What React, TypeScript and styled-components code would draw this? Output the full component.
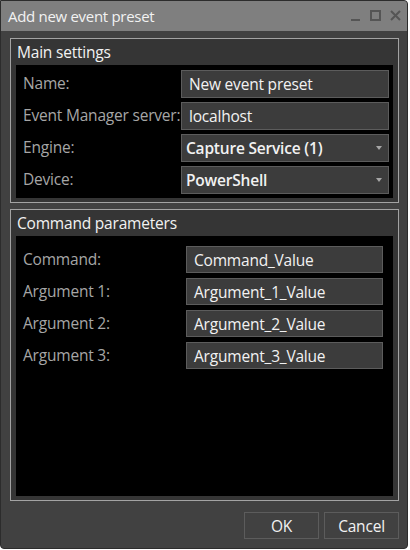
import { Fragment } from "react";
import styled, { createGlobalStyle } from "styled-components";

const GlobalStyle = createGlobalStyle`
  html, body {
    margin: 0;
    padding: 0;
    background: #ffffff;
  }
  body {
    font-family: "Open Sans", "Noto Sans", "Liberation Sans", sans-serif;
  }
`;

const Window = styled.div`
  width: 408px;
  height: 549px;
  box-sizing: border-box;
  display: flex;
  flex-direction: column;
  background: #414141;
  border: 1px solid #2c2c2c;
  border-radius: 0 4px 4px 4px;
  overflow: hidden;
`;

const TitleBar = styled.div`
  height: 30px;
  flex: none;
  display: flex;
  align-items: center;
  justify-content: space-between;
  padding: 0 6px 0 7px;
  background: #7f7f7f;
`;

const Title = styled.div`
  color: #f2f2f2;
  font-size: 15px;
  letter-spacing: -0.3px;
`;

const Controls = styled.div`
  display: flex;
  align-items: center;
  gap: 9px;
`;

const Body = styled.div`
  flex: 1;
  display: flex;
  flex-direction: column;
  padding: 7px 8px 9px 9px;
  gap: 6px;
`;

const Group = styled.div<{ $grow?: boolean }>`
  display: flex;
  flex-direction: column;
  flex: ${(p) => (p.$grow ? 1 : "none")};
  border: 1px solid #a3a3a3;
  background: #353535;
  padding: 0 5px 4px 5px;
`;

const GroupHeader = styled.div`
  height: 26px;
  display: flex;
  align-items: center;
  padding-left: 1px;
  color: #f2f2f2;
  font-size: 15.5px;
  letter-spacing: -0.2px;
`;

const Content = styled.div<{ $labelWidth: number; $pad: string; $gap: number }>`
  flex: 1;
  background: #000;
  display: grid;
  grid-template-columns: ${(p) => p.$labelWidth}px 1fr;
  grid-auto-rows: min-content;
  row-gap: ${(p) => p.$gap}px;
  padding: ${(p) => p.$pad};
  align-items: center;
`;

const Label = styled.div`
  color: #a6a6a6;
  font-size: 15.5px;
  letter-spacing: -0.2px;
  white-space: nowrap;
  margin-top: -2px;
`;

const Field = styled.div<{ $h: number; $bold?: boolean }>`
  position: relative;
  height: ${(p) => p.$h}px;
  box-sizing: border-box;
  display: flex;
  align-items: center;
  padding-left: ${(p) => (p.$bold ? 4 : 7)}px;
  background: #3c3c3c;
  border: 1px solid #5c5c5c;
  color: #f2f2f2;
  font-size: 15.5px;
  font-weight: ${(p) => (p.$bold ? 600 : 400)};
  letter-spacing: -0.2px;
`;

const Arrow = styled.span`
  position: absolute;
  right: 6px;
  top: 50%;
  margin-top: -2px;
  width: 0;
  height: 0;
  border-left: 3px solid transparent;
  border-right: 3px solid transparent;
  border-top: 4px solid #a6a6a6;
`;

const ButtonRow = styled.div`
  display: flex;
  justify-content: flex-end;
  gap: 5px;
  padding-top: 5px;
`;

const Button = styled.div`
  width: 75px;
  height: 27px;
  box-sizing: border-box;
  display: flex;
  align-items: center;
  justify-content: center;
  border: 1px solid #5c5c5c;
  background: #414141;
  color: #f2f2f2;
  font-size: 15.5px;
  letter-spacing: -0.2px;
`;

const mainRows = [
  { label: "Name:", value: "New event preset" },
  { label: "Event Manager server:", value: "localhost" },
  { label: "Engine:", value: "Capture Service (1)", combo: true },
  { label: "Device:", value: "PowerShell", combo: true },
];

const commandRows = [
  { label: "Command:", value: "Command_Value" },
  { label: "Argument 1:", value: "Argument_1_Value" },
  { label: "Argument 2:", value: "Argument_2_Value" },
  { label: "Argument 3:", value: "Argument_3_Value" },
];

export default function App() {
  return (
    <>
      <GlobalStyle />
      <Window>
        <TitleBar>
          <Title>Add new event preset</Title>
          <Controls>
            <svg width="10" height="12" viewBox="0 0 10 12">
              <rect x="0" y="9" width="9" height="2" fill="#555" />
            </svg>
            <svg width="11" height="12" viewBox="0 0 11 12">
              <rect x="1" y="1" width="9" height="9" fill="none" stroke="#555" strokeWidth="2" />
            </svg>
            <svg width="11" height="12" viewBox="0 0 11 12">
              <path d="M1 1 L10 10 M10 1 L1 10" stroke="#555" strokeWidth="2" />
            </svg>
          </Controls>
        </TitleBar>
        <Body>
          <Group>
            <GroupHeader>Main settings</GroupHeader>
            <Content $labelWidth={158} $pad="5px 4px 4px 7px" $gap={4}>
              {mainRows.map((r) => (
                <Fragment key={r.label}>
                  <Label>{r.label}</Label>
                  <Field $h={28} $bold={r.combo}>
                    {r.value}
                    {r.combo && <Arrow />}
                  </Field>
                </Fragment>
              ))}
            </Content>
          </Group>
          <Group $grow>
            <GroupHeader>Command parameters</GroupHeader>
            <Content $labelWidth={163} $pad="10px 10px 4px 7px" $gap={5}>
              {commandRows.map((r) => (
                <Fragment key={r.label}>
                  <Label>{r.label}</Label>
                  <Field $h={27}>{r.value}</Field>
                </Fragment>
              ))}
            </Content>
          </Group>
          <ButtonRow>
            <Button>OK</Button>
            <Button>Cancel</Button>
          </ButtonRow>
        </Body>
      </Window>
    </>
  );
}
